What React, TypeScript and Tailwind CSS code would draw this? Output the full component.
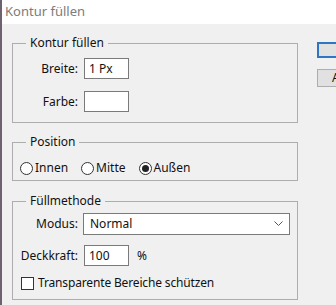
import React from "react";

// Photoshop "Kontur füllen" (Stroke) dialog, Windows chrome.

const font = { fontFamily: '"Noto Sans", "Open Sans", sans-serif' };

function Radio({ label, checked }: { label: string; checked?: boolean }) {
  return (
    <label className="flex items-center gap-[2px]">
      <span className="flex size-[13px] items-center justify-center rounded-full border border-[#333] bg-white">
        {checked && <span className="size-[7px] rounded-full bg-[#222]" />}
      </span>
      <span>{label}</span>
    </label>
  );
}

function Group({ title, className, children }: { title: string; className?: string; children: React.ReactNode }) {
  return (
    <fieldset className={"border border-[#adadad] " + (className ?? "")}>
      <legend className="ml-[13px] px-[4px] leading-[16px]">{title}</legend>
      {children}
    </fieldset>
  );
}

export default function App() {
  return (
    <div
      className="relative h-[305px] w-[336px] overflow-hidden border-l-2 border-[#6e6270] bg-[#f0f0f0] text-[12px] text-[#111]"
      style={font}
    >
      {/* title bar */}
      <div className="flex h-[24px] items-center bg-white pl-[3px] text-[13px] text-[#7c7c7c]">Kontur füllen</div>

      <div className="flex">
        <div className="ml-[10px] flex w-[286px] shrink-0 flex-col">
          <Group title="Kontur füllen" className="mt-[11px] pb-[10px] pt-[7px]">
            <div className="flex flex-col gap-[12px]">
              <div className="flex items-center">
                <span className="w-[65px] text-right">Breite:</span>
                <div className="ml-[6px] flex h-[21px] w-[45px] items-center border border-[#7a7a7a] bg-white px-[4px]">1 Px</div>
              </div>
              <div className="flex items-center">
                <span className="w-[65px] text-right">Farbe:</span>
                <div className="ml-[6px] h-[21px] w-[45px] border border-[#7a7a7a] bg-white" />
              </div>
            </div>
          </Group>

          <Group title="Position" className="mt-[11px] pb-[4px] pt-[10px]">
            <div className="flex h-[16px] items-center gap-[13px] pl-[7px]">
              <Radio label="Innen" />
              <Radio label="Mitte" />
              <Radio label="Außen" checked />
            </div>
          </Group>

          <Group title="Füllmethode" className="mt-[12px] pb-[7px] pt-[4px]">
            <div className="flex flex-col">
              <div className="flex items-center">
                <span className="w-[65px] text-right">Modus:</span>
                <div className="ml-[5px] flex h-[22px] w-[207px] items-center justify-between border border-[#7a7a7a] bg-white pl-[6px] pr-[6px]">
                  <span>Normal</span>
                  <svg width="9" height="6" viewBox="0 0 9 6" fill="none" stroke="#555" strokeWidth="1">
                    <path d="M0.5 0.5 L4.5 4.5 L8.5 0.5" />
                  </svg>
                </div>
              </div>
              <div className="mt-[10px] flex items-center">
                <span className="w-[65px] text-right">Deckkraft:</span>
                <div className="ml-[6px] flex h-[21px] w-[45px] items-center border border-[#7a7a7a] bg-white px-[4px]">100</div>
                <span className="ml-[8px]">%</span>
              </div>
              <label className="mt-[8px] flex items-center gap-[4px] pl-[8px]">
                <span className="size-[13px] border border-[#333] bg-white" />
                <span className="tracking-[-0.15px]">Transparente Bereiche schützen</span>
              </label>
            </div>
          </Group>
        </div>

        {/* OK / Abbrechen, cut off by the window edge */}
        <div className="ml-[19px] flex shrink-0 flex-col">
          <button className="mt-[18px] h-[16px] w-[80px] shrink-0 border-2 border-[#2f75c4] bg-[#e1e1e1]" />
          <button className="mt-[11px] flex h-[18px] w-[80px] shrink-0 items-center border border-[#adadad] bg-[#e1e1e1] pl-[14px] text-[12px]">
            Abbrechen
          </button>
        </div>
      </div>
    </div>
  );
}
